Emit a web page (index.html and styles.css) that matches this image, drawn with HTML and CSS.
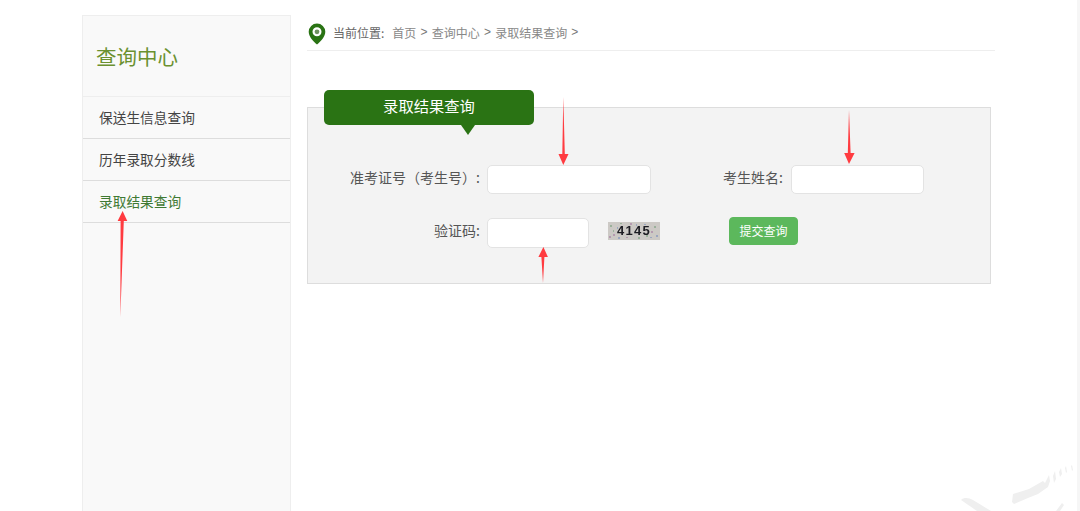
FILE: index.html
```html
<!DOCTYPE html>
<html lang="zh-CN">
<head>
<meta charset="utf-8">
<title>录取结果查询</title>
<link rel="stylesheet" href="styles.css">
</head>
<body>
<div class="page">
  <aside class="sidebar">
    <h2 class="side-title">查询中心</h2>
    <ul class="side-menu">
      <li class="side-item">保送生信息查询</li>
      <li class="side-item">历年录取分数线</li>
      <li class="side-item active">录取结果查询</li>
    </ul>
  </aside>
  <main class="main">
    <nav class="crumbs">
      <svg class="pin" width="18" height="22" viewBox="0 0 18 22"><path fill="#2a7314" fill-rule="evenodd" d="M9 .5a8.300 8.300 0 0 1 8.300 8.300c0 4.800-4.300 9.500-8.300 12.700C5 18.300.7 13.600.7 8.800A8.300 8.300 0 0 1 9 .5zm0 3.800a4.500 4.500 0 1 0 0 9 4.500 4.500 0 0 0 0-9z"/><circle cx="9" cy="8.800" r="2.400" fill="#6f9160"/></svg>
      <span class="crumb-lead">当前位置:</span>
      <a class="crumb">首页</a><span class="sep">&gt;</span>
      <a class="crumb">查询中心</a><span class="sep">&gt;</span>
      <a class="crumb">录取结果查询</a><span class="sep">&gt;</span>
    </nav>
    <section class="panel">
      <div class="tab">录取结果查询</div>
      <form class="form">
        <div class="row row-first">
          <label class="label label-wide">准考证号（考生号）:</label>
          <input class="field field-long" type="text">
          <label class="label label-name">考生姓名:</label>
          <input class="field field-name" type="text">
        </div>
        <div class="row row-second">
          <label class="label label-wide">验证码:</label>
          <input class="field field-code" type="text">
          <div class="captcha">
            <svg class="noise" width="52" height="18" viewBox="0 0 52 18">
              <g fill="#9ab09a"><rect x="2" y="3" width="2" height="2"/><rect x="38" y="13" width="2" height="2"/><rect x="46" y="4" width="2" height="2"/><rect x="12" y="1" width="2" height="1"/><rect x="30" y="15" width="2" height="2"/><rect x="5" y="8" width="1" height="2"/></g>
              <g fill="#b59ab0"><rect x="5" y="12" width="2" height="2"/><rect x="43" y="9" width="2" height="2"/><rect x="1" y="14" width="2" height="2"/><rect x="22" y="1" width="2" height="2"/><rect x="18" y="15" width="2" height="1"/></g>
              <g fill="#9aa6c0"><rect x="9" y="5" width="1" height="2"/><rect x="36" y="2" width="2" height="1"/><rect x="48" y="13" width="2" height="2"/><rect x="28" y="2" width="1" height="2"/><rect x="42" y="15" width="2" height="1"/><rect x="10" y="15" width="2" height="2"/></g>
            </svg>
            <span class="captcha-text">4145</span>
          </div>
          <button class="submit" type="button">提交查询</button>
        </div>
      </form>
    </section>
  </main>
</div>
<svg class="marks" width="1080" height="511" viewBox="0 0 1080 511">
  <g class="watermark" fill="#efefef">
    <path d="M961 500c3-3 8-2 12 0l18 11h-14z"/>
    <path d="M1013 494l16-5 14-8 2 2 4-8 1 6-2 6-10 7-10 4-14 6-2-2z"/>
    <path d="M1053 476l2-5 1 8-2 4zM1059 472l2-4 1 6-2 3zM1065 468l1-2 1 6-1 1zM1071 466l1-1 1 5-1 1z"/>
    <path d="M1056 511l6-8 2 2-4 6z"/>
  </g>
  <rect x="1077" y="0" width="3" height="511" fill="#f6f6f6"/>
  <g fill="#ff3b40">
    <path d="M563.300 97l1.500 57 3.700 0-5.200 11-4.800-11 3.800 0z"/>
    <path d="M849 110l1.600 43 4 0-5.600 11-4.800-11 3.600 0z"/>
    <path d="M543 283l-1.600-26-3 0 5-10 4.500 10-3.500 0z"/>
    <path d="M120.300 317l.3-96-3 0 5-10 4.700 10-3.500 0z"/>
  </g>
</svg>
</body>
</html>
```
FILE: styles.css
```css
* { box-sizing: border-box; }
html, body { margin: 0; height: 511px; overflow: hidden; background: #fff; }
body { font-family: "Noto Sans CJK SC", "Liberation Sans", sans-serif; color: #555; position: relative; }
.page { display: flex; align-items: flex-start; padding: 15px 0 0 82px; }
.sidebar { width: 209px; height: 496px; background: #f9f9f9; border: 1px solid #eee; border-bottom: 0; flex: none; }
.side-title { margin: 0; height: 81px; padding: 0 0 0 13px; font-size: 20.500px; font-weight: 400; line-height: 81px; color: #6b9130; border-bottom: 1px solid #eee; }
.side-menu { list-style: none; margin: 0; padding: 0; }
.side-item { height: 42px; line-height: 41px; padding-left: 16px; font-size: 13.700px; color: #444; border-bottom: 1px solid #ddd; }
.side-item.active { color: #3f7a33; }
.main { width: 688px; margin-left: 16px; }
.crumbs { display: flex; align-items: center; height: 36px; padding: 0 0 1px 1px; font-size: 12px; color: #888; border-bottom: 1px solid #eee; }
.pin { flex: none; margin: 3px 7px 0 0; }
.crumb-lead { color: #666; margin-right: 8px; }
.crumb { color: #888; }
.sep { margin: 0 4.200px; font-family: "Liberation Sans", sans-serif; color: #777; }
.panel { position: relative; width: 684px; height: 177px; margin-top: 56px; background: #f3f3f3; border: 1px solid #ddd; }
.tab { position: absolute; left: 16px; top: -18px; width: 210px; height: 35px; line-height: 31px; text-align: center; font-size: 15.300px; color: #fff; background: #2a7314; border-radius: 5px; }
.tab::after { content: ""; position: absolute; left: 137px; top: 35px; border: 7px solid transparent; border-top: 10px solid #2a7314; border-bottom: 0; }
.form { padding-top: 57px; }
.row { display: flex; align-items: center; }
.row-second { margin-top: 23px; }
.label { font-size: 14px; line-height: 20px; padding-bottom: 6px; color: #555; text-align: right; white-space: nowrap; }
.label-wide { width: 172px; margin-right: 7px; }
.label-name { width: 132px; margin-right: 8px; }
.field { height: 29px; background: #fff; border: 1px solid #e3e3e3; border-radius: 5px; padding: 0; }
.field-long { width: 164px; }
.field-name { width: 133px; }
.field-code { width: 102px; height: 30px; }
.captcha { position: relative; width: 52px; height: 18px; margin: 0 0 4px 19px; background: #ccc9c5; overflow: hidden; }
.noise { position: absolute; left: 0; top: 0; }
.captcha-text { position: relative; display: block; text-align: center; font: 700 13px/18px "Liberation Sans", sans-serif; color: #1c1c22; letter-spacing: 1.300px; filter: blur(.3px); }
.submit { width: 69px; height: 28px; margin: 0 0 4px 69px; padding: 0; font: 12px/26px "Noto Sans CJK SC", sans-serif; color: #fff; background: #5cb85c; border: 1px solid #5cb85c; border-radius: 4px; }
.marks { position: absolute; left: 0; top: 0; pointer-events: none; }
.watermark { filter: blur(.6px); }
```
